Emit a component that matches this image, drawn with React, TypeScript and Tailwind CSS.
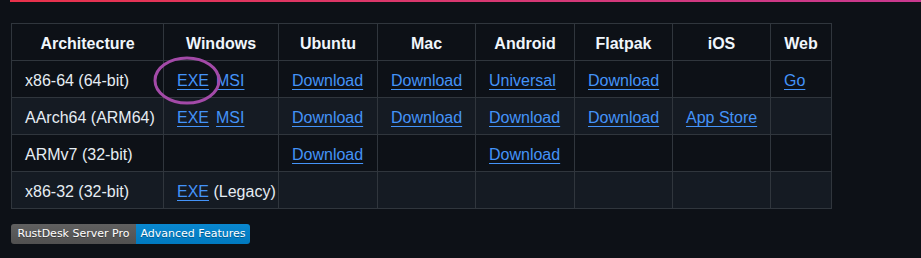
import React from 'react';

type Cell = React.ReactNode;

const A = ({ children }: { children: React.ReactNode }) => (
    <a href="#" className="text-[#4493f8] underline underline-offset-[3px] decoration-1">
        {children}
    </a>
);

const headers = ['Architecture', 'Windows', 'Ubuntu', 'Mac', 'Android', 'Flatpak', 'iOS', 'Web'];
const widths = ['w-[152px]', 'w-[115px]', 'w-[99px]', 'w-[98px]', 'w-[99px]', 'w-[98px]', 'w-[98px]', 'w-[61px]'];

const rows: Cell[][] = [
    [
        'x86-64 (64-bit)',
        <span><A>EXE</A><span className="inline-block w-[7px]" /><A>MSI</A></span>,
        <A>Download</A>,
        <A>Download</A>,
        <A>Universal</A>,
        <A>Download</A>,
        '',
        <A>Go</A>,
    ],
    [
        'AArch64 (ARM64)',
        <span><A>EXE</A><span className="inline-block w-[7px]" /><A>MSI</A></span>,
        <A>Download</A>,
        <A>Download</A>,
        <A>Download</A>,
        <A>Download</A>,
        <A>App Store</A>,
        '',
    ],
    ['ARMv7 (32-bit)', '', <A>Download</A>, '', <A>Download</A>, '', '', ''],
    ['x86-32 (32-bit)', <span><A>EXE</A> (Legacy)</span>, '', '', '', '', '', ''],
];

export default function App() {
    return (
        <div className="min-h-screen bg-[#0d1117] text-[#e6edf3] font-['Liberation_Sans',Arial,sans-serif] text-[16px] leading-[24px]">
            <div className="ml-[10px] h-[2px] bg-gradient-to-r from-[#e8314a] to-[#c8388f]" />

            <div className="relative pl-[11px] pt-[21px]">
                <table className="border-collapse table-fixed w-[820px]">
                    <thead>
                        <tr>
                            {headers.map((h, i) => (
                                <th key={h} className={`${widths[i]} border border-[#30363d] px-[13px] pt-[8px] pb-[4px] font-bold text-center text-[#f0f6fc]`}>
                                    {h}
                                </th>
                            ))}
                        </tr>
                    </thead>
                    <tbody>
                        {rows.map((r, i) => (
                            <tr key={i} className={i % 2 === 1 ? 'bg-[#151b23]' : 'bg-[#0d1117]'}>
                                {r.map((c, j) => (
                                    <td key={j} className="border border-[#30363d] px-[13px] pt-[8px] pb-[4px] whitespace-nowrap">
                                        {c}
                                    </td>
                                ))}
                            </tr>
                        ))}
                    </tbody>
                </table>

                {/* hand-drawn highlight around the EXE link */}
                <svg className="absolute left-[152px] top-[54px] pointer-events-none" width="72" height="52" viewBox="0 0 72 52">
                    <ellipse cx="35" cy="24.5" rx="32" ry="22.5" fill="none" stroke="#a34aa8" strokeWidth="3" />
                </svg>
            </div>

            <div className="flex pl-[11px] mt-[15px]">
                <div className="flex h-[20px] rounded-[3px] overflow-hidden font-['DejaVu_Sans',Verdana,sans-serif] text-[11px] leading-[20px] text-white [text-shadow:0_1px_0_rgba(1,1,1,0.3)]">
                    <span className="w-[125px] text-center bg-gradient-to-b from-[#606060] to-[#505050]">RustDesk Server Pro</span>
                    <span className="w-[114px] text-center bg-gradient-to-b from-[#0a88d0] to-[#0079bf]">Advanced Features</span>
                </div>
            </div>
        </div>
    );
}
